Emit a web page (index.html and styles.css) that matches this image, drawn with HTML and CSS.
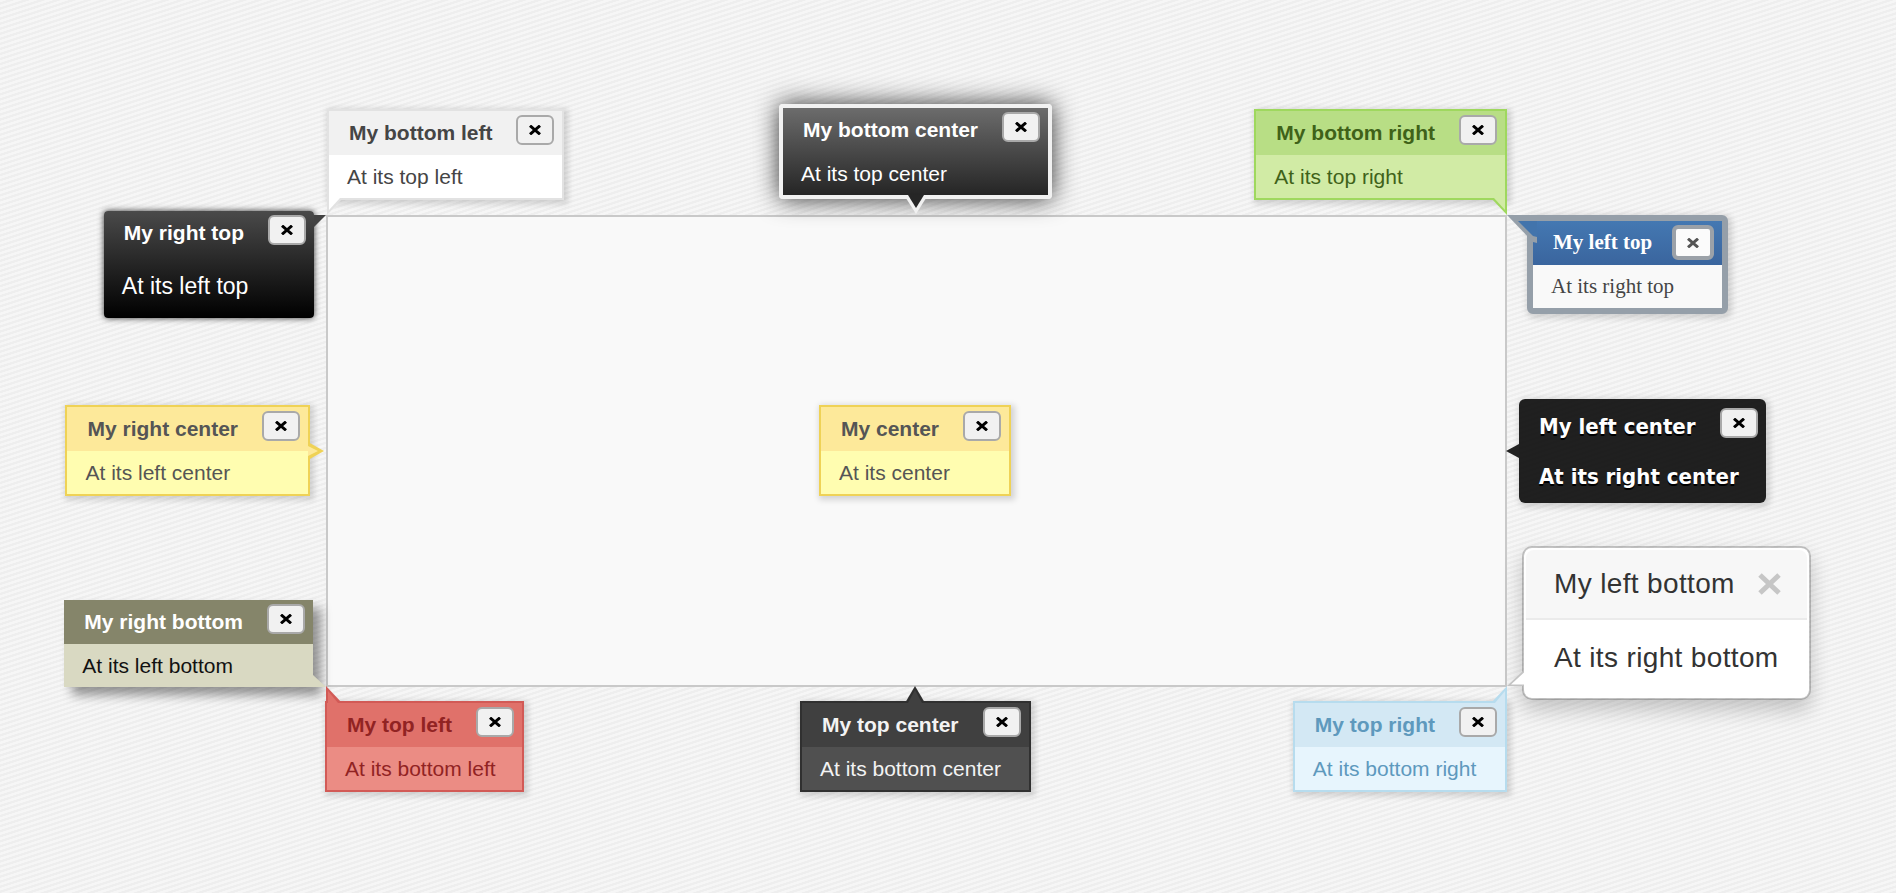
FILE: index.html
```html
<!DOCTYPE html>
<html>
<head>
<meta charset="utf-8">
<title>qTip positioning</title>
<link rel="stylesheet" href="styles.css">
</head>
<body>
<main class="page">
  <div class="stage">
    <div class="panel"></div>

    <div class="qtip light at-tl">
      <div class="qtip-titlebar">My bottom left<span class="qtip-close"><svg class="x" viewBox="0 0 12 10" width="12" height="10"><path d="M1 0.7L11 9.3M11 0.7L1 9.3"/></svg></span></div>
      <div class="qtip-content">At its top left</div>
      <svg class="tip tip-tl" width="16" height="17" viewBox="0 0 16 17"><polygon points="0,0 16,0 0,17" fill="#e2e2e2"/><polygon points="2,0 13,0 2,12" fill="#ffffff"/></svg>
    </div>

    <div class="qtip jtools at-tc">
      <div class="qtip-titlebar">My bottom center<span class="qtip-close"><svg class="x" viewBox="0 0 12 10" width="12" height="10"><path d="M1 0.7L11 9.3M11 0.7L1 9.3"/></svg></span></div>
      <div class="qtip-content">At its top center</div>
      <svg class="tip tip-tc" width="26" height="20" viewBox="0 0 26 20"><polygon points="1,0 25,0 13,19" fill="#f1f1f1"/><polygon points="5,0 21,0 13,13" fill="#262626"/></svg>
    </div>

    <div class="qtip green at-tr">
      <div class="qtip-titlebar">My bottom right<span class="qtip-close"><svg class="x" viewBox="0 0 12 10" width="12" height="10"><path d="M1 0.7L11 9.3M11 0.7L1 9.3"/></svg></span></div>
      <div class="qtip-content">At its top right</div>
      <svg class="tip tip-tr" width="16" height="17" viewBox="0 0 16 17"><polygon points="0,0 16,0 16,17" fill="#9FD85E"/><polygon points="3,0 14,0 14,12" fill="#D1EBA5"/></svg>
    </div>

    <div class="qtip youtube at-lt">
      <div class="qtip-titlebar">My right top<span class="qtip-close"><svg class="x" viewBox="0 0 12 10" width="12" height="10"><path d="M1 0.7L11 9.3M11 0.7L1 9.3"/></svg></span></div>
      <div class="qtip-content">At its left top</div>
      <svg class="tip tip-lt" width="12" height="12" viewBox="0 0 12 12"><polygon points="0,0 12,0 0,12" fill="#424242"/></svg>
    </div>

    <div class="qtip tipped at-rt">
      <div class="qtip-titlebar">My left top<span class="qtip-close"><svg class="x" viewBox="0 0 12 10" width="12" height="10"><path d="M1 0.7L11 9.3M11 0.7L1 9.3"/></svg></span></div>
      <div class="qtip-content">At its right top</div>
      <svg class="tip tip-rt" width="30" height="28" viewBox="0 0 30 28"><polygon points="0,0 30,0 30,28 26,27" fill="#959FA9"/><polygon points="11,6 30,6 30,22 26,21" fill="#4274AC"/></svg>
    </div>

    <div class="qtip yellow at-lc">
      <div class="qtip-titlebar">My right center<span class="qtip-close"><svg class="x" viewBox="0 0 12 10" width="12" height="10"><path d="M1 0.7L11 9.3M11 0.7L1 9.3"/></svg></span></div>
      <div class="qtip-content">At its left center</div>
      <svg class="tip tip-lc" width="17" height="20" viewBox="0 0 17 20"><polygon points="0,1 16,10 0,19" fill="#EFD256"/><polygon points="0,5 10,10 0,15" fill="#FDE99A"/></svg>
    </div>

    <div class="qtip yellow at-c">
      <div class="qtip-titlebar">My center<span class="qtip-close"><svg class="x" viewBox="0 0 12 10" width="12" height="10"><path d="M1 0.7L11 9.3M11 0.7L1 9.3"/></svg></span></div>
      <div class="qtip-content">At its center</div>
    </div>

    <div class="qtip tipsy at-rc">
      <div class="qtip-titlebar">My left center<span class="qtip-close"><svg class="x" viewBox="0 0 12 10" width="12" height="10"><path d="M1 0.7L11 9.3M11 0.7L1 9.3"/></svg></span></div>
      <div class="qtip-content">At its right center</div>
      <svg class="tip tip-rc" width="13" height="16" viewBox="0 0 13 16"><polygon points="0,8 13,1 13,15" fill="#222222"/></svg>
    </div>

    <div class="qtip cluetip at-lb">
      <div class="qtip-titlebar">My right bottom<span class="qtip-close"><svg class="x" viewBox="0 0 12 10" width="12" height="10"><path d="M1 0.7L11 9.3M11 0.7L1 9.3"/></svg></span></div>
      <div class="qtip-content">At its left bottom</div>
      <svg class="tip tip-lb" width="13" height="12" viewBox="0 0 13 12"><polygon points="0,0 0,12 13,12" fill="#D9D9C2"/></svg>
    </div>

    <div class="qtip bootstrap at-rb">
      <div class="qtip-titlebar">My left bottom<span class="qtip-close"><svg class="bx" viewBox="0 0 23 22" width="23" height="22"><path d="M2 2L21 20M21 2L2 20"/></svg></span></div>
      <div class="qtip-content">At its right bottom</div>
      <svg class="tip tip-rb" width="17" height="16" viewBox="0 0 17 16"><polygon points="0,16 17,0 17,16" fill="#c4c4c4"/><polygon points="4,14.5 17,2.5 17,14.5" fill="#ffffff"/></svg>
    </div>

    <div class="qtip red at-bl">
      <div class="qtip-titlebar">My top left<span class="qtip-close"><svg class="x" viewBox="0 0 12 10" width="12" height="10"><path d="M1 0.7L11 9.3M11 0.7L1 9.3"/></svg></span></div>
      <div class="qtip-content">At its bottom left</div>
      <svg class="tip tip-bl" width="17" height="17" viewBox="0 0 17 17"><polygon points="1,0 1,17 17,17" fill="#D25A56"/><polygon points="3,5 3,17 13,17" fill="#E0716A"/></svg>
    </div>

    <div class="qtip dark at-bc">
      <div class="qtip-titlebar">My top center<span class="qtip-close"><svg class="x" viewBox="0 0 12 10" width="12" height="10"><path d="M1 0.7L11 9.3M11 0.7L1 9.3"/></svg></span></div>
      <div class="qtip-content">At its bottom center</div>
      <svg class="tip tip-bc" width="20" height="17" viewBox="0 0 20 17"><polygon points="10,0 20,17 0,17" fill="#303030"/><polygon points="10,4 17,17 3,17" fill="#404040"/></svg>
    </div>

    <div class="qtip blue at-br">
      <div class="qtip-titlebar">My top right<span class="qtip-close"><svg class="x" viewBox="0 0 12 10" width="12" height="10"><path d="M1 0.7L11 9.3M11 0.7L1 9.3"/></svg></span></div>
      <div class="qtip-content">At its bottom right</div>
      <svg class="tip tip-br" width="16" height="17" viewBox="0 0 16 17"><polygon points="16,0 16,17 0,17" fill="#B7DCEE"/><polygon points="14,5 14,17 4,17" fill="#D3E8F4"/></svg>
    </div>
  </div>
</main>
</body>
</html>
```

FILE: styles.css
```css
* { box-sizing: border-box; }
html, body { margin: 0; }
body {
  min-height: 893px;
  background-color: #f2f2f2;
  background-image: repeating-linear-gradient(162deg, #f6f6f6 0, #f6f6f6 2px, #eeeeee 2.5px, #eeeeee 4.3px, #f6f6f6 4.8px);
  font-family: "Liberation Sans", Arial, Helvetica, sans-serif;
}
.page { padding: 215px 0 0 326px; }
.stage { position: relative; width: 1181px; height: 472px; }
.panel { width: 100%; height: 100%; background: #f9f9f9; border: 2px solid #c9c9c9; }

/* base tooltip */
.qtip {
  position: absolute;
  width: max-content;
  white-space: nowrap;
  font-size: 21px;
  line-height: 23.5px;
  border: 2px solid transparent;
  box-shadow: 2px 2px 6px 2px rgba(0,0,0,.15);
}
.qtip-titlebar { position: relative; padding: 10px 70px 10px 20px; font-weight: bold; }
.qtip-content { padding: 10px 18px; }
.qtip-close {
  position: absolute; right: 8px; top: 4px;
  width: 38px; height: 30px;
  display: flex; align-items: center; justify-content: center;
  border: 2px solid #a9a9a9; border-radius: 6px;
  background: #f1f1f1; color: #000;
}
.x { display: block; fill: none; stroke: currentColor; stroke-width: 3; }
.bx { display: block; fill: none; stroke: #c6c6c6; stroke-width: 5; }
.tip { position: absolute; display: block; }

/* placements (relative to the panel) */
.at-tl { left: 1px; bottom: calc(100% + 15px); }
.at-tc { left: 453px; bottom: calc(100% + 16px); }
.at-tr { right: 0; bottom: calc(100% + 15px); }
.at-lt { right: calc(100% + 12px); top: -4px; }
.at-rt { left: calc(100% + 20px); top: 0; }
.at-lc { right: calc(100% + 16px); top: 190px; }
.at-c  { left: 493px; top: 190px; }
.at-rc { left: calc(100% + 12px); top: 184px; }
.at-lb { right: calc(100% + 13px); bottom: 0; }
.at-rb { left: calc(100% + 15px); bottom: -13px; }
.at-bl { left: -1px; top: calc(100% + 14px); }
.at-bc { left: 474px; top: calc(100% + 14px); }
.at-br { right: 0; top: calc(100% + 14px); }

/* tips */
.tip-tl { left: -2px; top: 100%; }
.tip-tc { left: 50%; margin-left: -13px; top: 100%; }
.tip-tr { right: -2px; top: 100%; }
.tip-lt { left: 100%; top: 4px; }
.tip-rt { left: -26px; top: -6px; }
.tip-lc { left: 100%; top: 50%; margin-top: -10px; }
.tip-rc { right: 100%; top: 50%; margin-top: -8px; }
.tip-lb { left: 100%; bottom: 0; }
.tip-rb { right: 100%; bottom: 12px; }
.tip-bl { left: -2px; bottom: 100%; }
.tip-bc { left: 50%; margin-left: -10px; bottom: 100%; }
.tip-br { right: -2px; bottom: 100%; }

/* colour styles */
.yellow { background: #FFFDB0; border-color: #EFD256; color: #555; }
.yellow .qtip-titlebar { background: #FDE99A; }

.light { background: #fff; border-color: #E2E2E2; color: #454545; }
.light .qtip-titlebar { background: #f1f1f1; }

.dark { background: #505050; border-color: #303030; color: #f3f3f3; }
.dark .qtip-titlebar { background: #404040; }

.red { background: #EB8C84; border-color: #D25A56; color: #912323; }
.red .qtip-titlebar { background: #E0716A; }

.green { background: #D1EBA5; border-color: #9FD85E; color: #3F6219; }
.green .qtip-titlebar { background: #B8DE85; }

.blue { background: #E7F5FD; border-color: #B7DCEE; color: #5E99BD; }
.blue .qtip-titlebar { background: #D3E8F4; }

.jtools {
  border: 4px solid #f1f1f1; border-radius: 4px;
  background: linear-gradient(#6c6c6c, #252525);
  color: #fff;
  box-shadow: 0 0 24px #333;
}

.youtube {
  border: 0; border-radius: 4px;
  background: linear-gradient(#4A4A4A, #000);
  color: #fff;
  box-shadow: 0 0 6px #333;
}
.youtube .qtip-content { padding: 18px; font-size: 23px; line-height: normal; }

.tipped {
  border: 6px solid #959FA9; border-radius: 6px;
  background: #F9F9F9; color: #454545;
  font-family: "Liberation Serif", "Times New Roman", serif;
}
.tipped .qtip-titlebar { color: #fff; background: linear-gradient(#4478B2, #3A659E); }
.tipped .qtip-close { width: 42px; height: 35px; border: 4px solid #9ba1a8; background: #fbfbfb; color: #555; }

.tipsy {
  border: 0; border-radius: 6px;
  background: rgba(0,0,0,.87); color: #fff;
  font-family: "DejaVu Sans Condensed", "DejaVu Sans", sans-serif;
  font-stretch: condensed;
  font-size: 22px; line-height: 32px; font-weight: bold;
  text-shadow: 0 2px #000;
}
.tipsy .qtip-titlebar { padding: 12px 70px 0 20px; }
.tipsy .qtip-content { padding: 18px 20px 10px; }
.tipsy .qtip-close { top: 9px; text-shadow: none; }

.cluetip {
  border: 0;
  background: #D9D9C2; color: #111;
  box-shadow: 8px 8px 10px rgba(0,0,0,.4);
}
.cluetip .qtip-titlebar { background: #85856A; color: #fff; }

.bootstrap {
  font-size: 28px; line-height: 40px; letter-spacing: .35px;
  color: #333; padding: 2px;
  background: #fff; background-clip: padding-box;
  border: 2px solid rgba(0,0,0,.2); border-radius: 10px;
  box-shadow: 0 10px 20px rgba(0,0,0,.2);
}
.bootstrap .qtip-titlebar {
  padding: 16px 28px; line-height: 36px; font-weight: normal;
  background: #f7f7f7; border-bottom: 2px solid #ebebeb;
  border-radius: 8px 8px 0 0;
}
.bootstrap .qtip-content { padding: 18px 28px; }
.bootstrap .qtip-close {
  right: 26px; top: 23px; width: 23px; height: 22px;
  border: 0; background: transparent;
}
```
